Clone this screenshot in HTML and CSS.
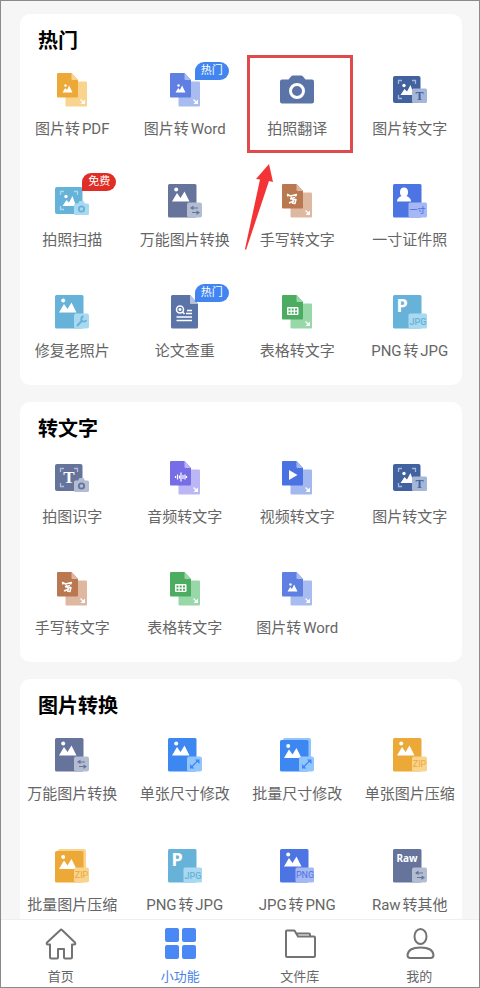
FILE: index.html
```
<!DOCTYPE html>
<html lang="zh-CN">
<head>
    <meta charset="UTF-8">
    <meta name="viewport" content="width=device-width, initial-scale=1.0">
    <title>小功能</title>
    <link rel="stylesheet" href="styles.css">
</head>
<body>
    <!-- shared icon parts -->
    <svg class="defs" aria-hidden="true">
        <symbol id="doc" viewBox="0 0 34 34">
            <path class="soft" d="M11.500 8.500h19.500a1 1 0 0 1 1 1v23a1 1 0 0 1-1 1h-19.500a1 1 0 0 1-1-1v-23z"/>
            <path class="main" d="M3 0h13.500l6.500 7v16.500a1 1 0 0 1-1 1H3a1 1 0 0 1-1-1V1a1 1 0 0 1 1-1z"/>
            <path class="soft" d="M16.500 0l6.500 7h-5.500a1 1 0 0 1-1-1z"/>
            <path class="line" stroke-width="1.300" d="M25.500 26.500l3 3"/>
            <path class="white" d="M30 26.500v4.500h-4.500z"/>
        </symbol>
        <symbol id="small-hills" viewBox="0 0 34 34">
            <circle class="white" cx="10.500" cy="12.500" r="1.200"/>
            <path class="white" d="M7.500 19.500l2.700-4.500 1.700 2 2.200-4.500 3.400 7z"/>
        </symbol>
        <symbol id="scan" viewBox="0 0 34 34">
            <rect class="main" y="3" width="27.500" height="27" rx="2"/>
            <path class="pale" stroke-width="1.300" d="M5.500 11V7.500H9M19 7.500h3.500V11M5.500 22v3.500H9"/>
        </symbol>
        <symbol id="scan-hills" viewBox="0 0 34 34">
            <circle class="white" cx="11" cy="12.500" r="1.700"/>
            <path class="white" d="M7.500 22l4-6 2.500 2.500 3.500-6.500L21 22z"/>
        </symbol>
        <symbol id="scan-camera" viewBox="0 0 34 34">
            <path class="soft" d="M20.500 19.500h2.500l1.500-2.500h4l1.500 2.500h2.500a1.500 1.500 0 0 1 1.500 1.500v8.500a1.500 1.500 0 0 1-1.500 1.500h-12a1.500 1.500 0 0 1-1.500-1.500V21a1.500 1.500 0 0 1 1.500-1.500z"/>
            <circle class="mark" cx="26.500" cy="25" r="2.700" stroke-width="1.800"/>
        </symbol>
        <symbol id="scan-text" viewBox="0 0 34 34">
            <rect class="soft" x="19" y="15.500" width="15" height="14.500" rx="1.500"/>
        </symbol>
        <symbol id="sheet" viewBox="0 0 34 34">
            <rect class="main" width="28.500" height="33.500" rx="1.500"/>
        </symbol>
        <symbol id="hills" viewBox="0 0 34 34">
            <circle class="white" cx="8.200" cy="5.500" r="2"/>
            <path class="white" d="M4 17.500L9 9l3.500 5 4-6.500 5 10z"/>
        </symbol>
        <symbol id="stack" viewBox="0 0 34 34">
            <rect class="soft" x="3" width="28" height="31" rx="2"/>
            <rect class="main" y="2" width="28.500" height="31.500" rx="1.500"/>
            <circle class="white" cx="8.200" cy="8" r="2"/>
            <path class="white" d="M4 20L9 11.500l3.500 5 4-6.500 5 10z"/>
        </symbol>
        <symbol id="tag" viewBox="0 0 34 34">
            <rect class="soft" x="19" y="18.500" width="15" height="15" rx="2"/>
        </symbol>
        <symbol id="tag-wide" viewBox="0 0 34 34">
            <rect class="soft" x="15.500" y="18.500" width="18.500" height="15" rx="1.500"/>
        </symbol>
        <symbol id="swap" viewBox="0 0 34 34">
            <use href="#tag"/>
            <path class="mark" stroke-width="1.200" d="M30 24h-7M24 28.500h6.500"/>
            <path class="main" d="M25.500 21.500v4.500L22 24zM28.500 26.500v4.500l3.500-2.500z"/>
        </symbol>
        <symbol id="resize" viewBox="0 0 34 34">
            <use href="#tag"/>
            <path class="mark" stroke-width="1.200" d="M23 29.500l7-7"/>
            <path class="main" d="M27 21.500h4.500V26zM22 26v4.500h4.500z"/>
        </symbol>
        <symbol id="wrench" viewBox="0 0 34 34">
            <use href="#tag"/>
            <path class="mark" stroke-width="2" stroke-linecap="round" d="M22.500 30.500l4.500-5"/>
            <path class="mark" stroke-width="1.800" d="M28.500 21.500a2.600 2.600 0 1 0 2.800 3.500"/>
        </symbol>
        <symbol id="pen" viewBox="0 0 34 34">
            <path class="line" stroke-width="1.400" stroke-linejoin="round" d="M8 12.500l-.5-2 3 1.500 6-1.500-1 2M11 13l1.500 3M10 15l5-1.500M12.500 16l3.500-.5-1 4-3-.5M9 19l5-2"/>
        </symbol>
        <symbol id="grid" viewBox="0 0 34 34">
            <rect class="white" x="7" y="12" width="11.500" height="8" rx="1"/>
            <path class="main" d="M8.500 13.500h2v2h-2zM11.700 13.500h2v2h-2zM15 13.500h2v2h-2zM8.500 16.700h2v2h-2zM11.700 16.700h2v2h-2zM15 16.700h2v2h-2z"/>
        </symbol>
        <symbol id="camera" viewBox="0 0 34 34">
            <path class="main" d="M2 6.500h6.500l2.500-3q.700-1 2-1h8q1.300 0 2 1l2.500 3H32a2 2 0 0 1 2 2V28.500a2 2 0 0 1-2 2H2a2 2 0 0 1-2-2V8.500a2 2 0 0 1 2-2z"/>
            <circle class="line" cx="17" cy="18" r="6.500" stroke-width="3"/>
        </symbol>
    </svg>

    <main id="content">
        <section class="card">
            <h2>热门</h2>
            <div class="tools">
                <a class="tool orange" href="#">
                    <span class="pic"><svg class="icon"><use href="#doc"/><use href="#small-hills"/></svg></span>
                    图片转PDF
                </a>
                <a class="tool word" href="#">
                    <span class="pic"><svg class="icon"><use href="#doc"/><use href="#small-hills"/></svg><b class="badge">热门</b></span>
                    图片转Word
                </a>
                <a class="tool steel" href="#">
                    <span class="pic"><svg class="icon"><use href="#camera"/></svg></span>
                    拍照翻译
                    <span class="highlight"></span>
                    <svg class="pointer" viewBox="0 0 30 88"><path d="M24 0L28 18 24 17 1 86 0 85 15 15.500 11 15z"/></svg>
                </a>
                <a class="tool navy" href="#">
                    <span class="pic">
                        <svg class="icon">
                            <use href="#scan"/><use href="#scan-hills"/><use href="#scan-text"/>
                            <text class="glyph serif" x="26.500" y="27" font-size="12">T</text>
                        </svg>
                    </span>
                    图片转文字
                </a>
                <a class="tool sky" href="#">
                    <span class="pic"><svg class="icon"><use href="#scan"/><use href="#scan-hills"/><use href="#scan-camera"/></svg><b class="badge free">免费</b></span>
                    拍照扫描
                </a>
                <a class="tool slate" href="#">
                    <span class="pic"><svg class="icon"><use href="#sheet"/><use href="#hills"/><use href="#swap"/></svg></span>
                    万能图片转换
                </a>
                <a class="tool brown" href="#">
                    <span class="pic"><svg class="icon"><use href="#doc"/><use href="#pen"/></svg></span>
                    手写转文字
                </a>
                <a class="tool royal" href="#">
                    <span class="pic">
                        <svg class="icon">
                            <use href="#sheet"/>
                            <path class="white" d="M4 17.500q0-4 4.500-5.500-1.500-1-1.500-3V8q0-4.500 4-4.500t4 4.500v1q0 2-1.500 3 4.500 1.500 4.500 5.500z"/>
                            <use href="#tag-wide"/>
                            <text class="glyph cjk" x="24.500" y="29" font-size="8">一寸</text>
                        </svg>
                    </span>
                    一寸证件照
                </a>
                <a class="tool sky" href="#">
                    <span class="pic"><svg class="icon"><use href="#sheet"/><use href="#hills"/><use href="#wrench"/></svg></span>
                    修复老照片
                </a>
                <a class="tool steel" href="#">
                    <span class="pic">
                        <svg class="icon">
                            <path class="main" d="M4.500 0H22l8 9v23a1.500 1.500 0 0 1-1.500 1.500h-24A1.500 1.500 0 0 1 3 32V1.500A1.500 1.500 0 0 1 4.500 0z"/>
                            <path class="soft" d="M22 0l8 9h-7a1 1 0 0 1-1-1z"/>
                            <circle class="line" cx="12" cy="14.500" r="3.500" stroke-width="1.500"/>
                            <path class="line" stroke-width="1.500" d="M10.500 14.500h3M12 13v3M14.500 17l2 2M19 15.500h5M18 18.500h6M8.500 22h15.500M8.500 25.500h15.500"/>
                        </svg>
                        <b class="badge">热门</b>
                    </span>
                    论文查重
                </a>
                <a class="tool green" href="#">
                    <span class="pic"><svg class="icon"><use href="#doc"/><use href="#grid"/></svg></span>
                    表格转文字
                </a>
                <a class="tool sky" href="#">
                    <span class="pic">
                        <svg class="icon">
                            <use href="#sheet"/>
                            <text class="letter" x="9" y="17" font-size="18">P</text>
                            <use href="#tag-wide"/>
                            <text class="glyph" x="25" y="29.500" font-size="9">JPG</text>
                        </svg>
                    </span>
                    PNG转JPG
                </a>
            </div>
        </section>

        <section class="card">
            <h2>转文字</h2>
            <div class="tools">
                <a class="tool slate" href="#">
                    <span class="pic">
                        <svg class="icon">
                            <use href="#scan"/>
                            <text class="letter serif" x="14" y="21.500" font-size="17">T</text>
                            <use href="#scan-camera"/>
                        </svg>
                    </span>
                    拍图识字
                </a>
                <a class="tool violet" href="#">
                    <span class="pic">
                        <svg class="icon">
                            <use href="#doc"/>
                            <path class="line" stroke-width="1.200" d="M7.500 15v2M9.500 13.500v5M11.500 14.500v3M13 11.500v9M15 14v4M17 13.500v5M18.500 15v2"/>
                        </svg>
                    </span>
                    音频转文字
                </a>
                <a class="tool video" href="#">
                    <span class="pic"><svg class="icon"><use href="#doc"/><path class="white" d="M9 9l8.500 5L9 19z"/></svg></span>
                    视频转文字
                </a>
                <a class="tool navy" href="#">
                    <span class="pic">
                        <svg class="icon">
                            <use href="#scan"/><use href="#scan-hills"/><use href="#scan-text"/>
                            <text class="glyph serif" x="26.500" y="27" font-size="12">T</text>
                        </svg>
                    </span>
                    图片转文字
                </a>
                <a class="tool brown" href="#">
                    <span class="pic"><svg class="icon"><use href="#doc"/><use href="#pen"/></svg></span>
                    手写转文字
                </a>
                <a class="tool green" href="#">
                    <span class="pic"><svg class="icon"><use href="#doc"/><use href="#grid"/></svg></span>
                    表格转文字
                </a>
                <a class="tool word" href="#">
                    <span class="pic"><svg class="icon"><use href="#doc"/><use href="#small-hills"/></svg></span>
                    图片转Word
                </a>
            </div>
        </section>

        <section class="card">
            <h2>图片转换</h2>
            <div class="tools">
                <a class="tool slate" href="#">
                    <span class="pic"><svg class="icon"><use href="#sheet"/><use href="#hills"/><use href="#swap"/></svg></span>
                    万能图片转换
                </a>
                <a class="tool blue" href="#">
                    <span class="pic"><svg class="icon"><use href="#sheet"/><use href="#hills"/><use href="#resize"/></svg></span>
                    单张尺寸修改
                </a>
                <a class="tool blue" href="#">
                    <span class="pic"><svg class="icon"><use href="#stack"/><use href="#resize"/></svg></span>
                    批量尺寸修改
                </a>
                <a class="tool orange" href="#">
                    <span class="pic">
                        <svg class="icon">
                            <use href="#sheet"/><use href="#hills"/><use href="#tag"/>
                            <text class="glyph thin" x="26.500" y="29" font-size="9">ZIP</text>
                        </svg>
                    </span>
                    单张图片压缩
                </a>
                <a class="tool orange" href="#">
                    <span class="pic">
                        <svg class="icon">
                            <use href="#stack"/><use href="#tag"/>
                            <text class="glyph thin" x="26.500" y="29" font-size="9">ZIP</text>
                        </svg>
                    </span>
                    批量图片压缩
                </a>
                <a class="tool sky" href="#">
                    <span class="pic">
                        <svg class="icon">
                            <use href="#sheet"/>
                            <text class="letter" x="9" y="17" font-size="18">P</text>
                            <use href="#tag-wide"/>
                            <text class="glyph" x="25" y="29.500" font-size="9">JPG</text>
                        </svg>
                    </span>
                    PNG转JPG
                </a>
                <a class="tool royal" href="#">
                    <span class="pic">
                        <svg class="icon">
                            <use href="#sheet"/><use href="#hills"/><use href="#tag-wide"/>
                            <text class="glyph thin" x="25" y="29" font-size="9">PNG</text>
                        </svg>
                    </span>
                    JPG转PNG
                </a>
                <a class="tool slate" href="#">
                    <span class="pic">
                        <svg class="icon">
                            <use href="#sheet"/>
                            <text class="letter" x="14" y="13" font-size="10">Raw</text>
                            <use href="#swap"/>
                        </svg>
                    </span>
                    Raw转其他
                </a>
            </div>
        </section>
    </main>

    <nav id="tabs">
        <a href="#">
            <svg viewBox="0 0 32 32"><path d="M16 1.500L2 14.500q-1 2 1 2h2V29q0 1.500 1.500 1.500H12q1 0 1-1V21h6v8.500q0 1 1 1h5.500q1.500 0 1.500-1.500V16.500h2q2 0 1-2L17.500 2.500q-1-1-1.500-1z"/></svg>
            首页
        </a>
        <a href="#" class="active">
            <svg viewBox="0 0 32 32"><rect x="1" width="14" height="14" rx="2"/><rect x="18" width="14" height="14" rx="2"/><rect x="1" y="17" width="14" height="14" rx="2"/><rect x="18" y="17" width="14" height="14" rx="2"/></svg>
            小功能
        </a>
        <a href="#">
            <svg viewBox="0 0 32 32"><path d="M3 2.500h7.500l3.500 6h16a1 1 0 0 1 1 1V28a1 1 0 0 1-1 1H3a1 1 0 0 1-1-1V3.500a1 1 0 0 1 1-1zM12.500 5.500H25q1 0 1 1v2"/></svg>
            文件库
        </a>
        <a href="#">
            <svg viewBox="0 0 32 32"><ellipse cx="17.500" cy="8.500" rx="6" ry="7.500"/><path d="M7.500 30Q4.500 30 4.500 27C5 22 10 19.500 17.500 19.500S30 22 30.500 27Q30.500 30 27.500 30z"/></svg>
            我的
        </a>
    </nav>
</body>
</html>
```
FILE: styles.css
```
* {
    box-sizing: border-box;
}

body {
    margin: 0;
    height: 100vh;
    display: flex;
    flex-direction: column;
    border: 1px solid #8a8a8a;
    background-color: #f6f6f6;
    font-family: Roboto, "Noto Sans CJK SC", sans-serif;
    text-autospace: normal;
}

a {
    text-decoration: none;
    color: #666;
}

.defs {
    position: absolute;
    width: 0;
    height: 0;
}

#content {
    flex: 1;
    min-height: 0;
    overflow-x: hidden;
    overflow-y: auto;
    scrollbar-width: none;
    padding: 13px 17px 0 19px;
}

.card {
    margin-bottom: 17px;
    padding: 13px 0 24px;
    border-radius: 10px;
    background-color: #fff;
}

.card h2 {
    margin: 0 18px 18px;
    font-size: 20px;
    line-height: 28px;
    font-weight: bold;
    color: #000;
}

.tools {
    display: grid;
    grid-template-columns: repeat(4, 1fr);
    row-gap: 45px;
    margin: 0 -4px;
}

.tool {
    position: relative;
    display: flex;
    flex-direction: column;
    align-items: center;
    font-size: 15px;
    line-height: 20px;
    white-space: nowrap;
}

.pic {
    position: relative;
    height: 34px;
    margin-bottom: 12px;
}

.icon {
    display: block;
    width: 34px;
    height: 34px;
}

.badge {
    position: absolute;
    left: 27px;
    top: -11px;
    width: 34px;
    border-radius: 9px 9px 9px 0;
    background-color: #4285f0;
    color: #fff;
    font-size: 11px;
    line-height: 18px;
    font-weight: normal;
    text-align: center;
}

.badge.free {
    background-color: #e02e26;
}

/* icon paint */
.main { fill: var(--main); }
.soft { fill: var(--soft); }
.white { fill: #fff; }
.line { fill: none; stroke: #fff; }
.pale { fill: none; stroke: var(--soft); }
.mark { fill: none; stroke: var(--main); }

.glyph {
    fill: var(--main);
    font-family: Roboto, sans-serif;
    font-weight: 500;
    text-anchor: middle;
}

.glyph.thin {
    font-weight: normal;
}

.letter {
    fill: #fff;
    font-family: "Noto Sans", sans-serif;
    font-weight: bold;
    text-anchor: middle;
}

.glyph.cjk {
    font-family: "Noto Sans CJK SC", sans-serif;
}

.glyph.serif, .letter.serif {
    font-family: "Liberation Serif", serif;
    font-weight: bold;
}

.orange { --main: #eda937; --soft: #f9d48f; }
.word { --main: #5f7fe2; --soft: #a9bcf0; }
.steel { --main: #5b74a8; --soft: #b4c2dc; }
.navy { --main: #41619f; --soft: #a6b6d6; }
.sky { --main: #67b2d8; --soft: #a9d9f0; }
.slate { --main: #66739b; --soft: #b3bdd2; }
.brown { --main: #b97850; --soft: #dfb8a2; }
.royal { --main: #4c74e3; --soft: #a5b8f3; }
.green { --main: #4cad62; --soft: #98d8a8; }
.violet { --main: #776de6; --soft: #bbb6f5; }
.video { --main: #4b72e2; --soft: #a4b8f0; }
.blue { --main: #3d87f3; --soft: #92c5fb; }

/* red frame and arrow laid over the grid */
.highlight {
    position: absolute;
    inset: -18px 1px -14px 6px;
    border: 3px solid #e04a4c;
}

.pointer {
    position: absolute;
    left: 4px;
    top: 91px;
    width: 30px;
    height: 88px;
    z-index: 1;
    fill: #f43336;
}

#tabs {
    display: flex;
    padding: 8px 0 1px;
    border-top: 1px solid #eee;
    background-color: #fff;
}

#tabs a {
    flex: 1;
    display: flex;
    flex-direction: column;
    align-items: center;
    gap: 8px;
    font-size: 13px;
    line-height: 18px;
}

#tabs svg {
    width: 32px;
    height: 32px;
    fill: none;
    stroke: #737373;
    stroke-width: 2;
    stroke-linejoin: round;
}

#tabs .active {
    color: #4a83e8;
}

#tabs .active svg {
    fill: #4a88f5;
    stroke: none;
}
```
